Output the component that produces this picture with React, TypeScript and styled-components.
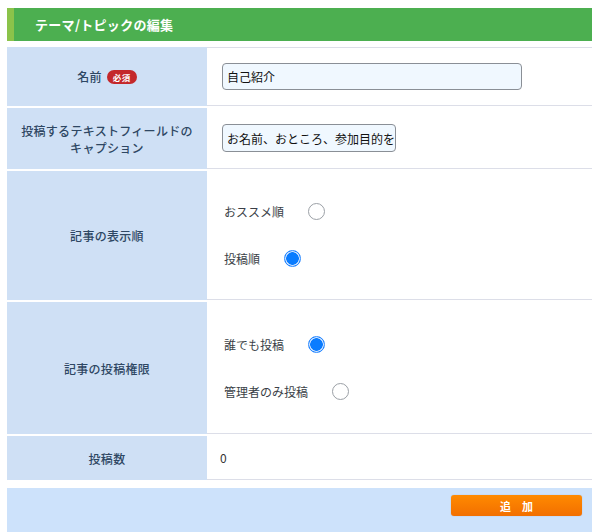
import React from "react";
import styled, { createGlobalStyle } from "styled-components";

const GlobalStyle = createGlobalStyle`
  html, body {
    margin: 0;
    padding: 0;
    background: #fff;
  }
  body {
    font-family: "Noto Sans CJK JP", "Noto Sans", sans-serif;
    font-size: 12px;
    color: #333;
  }
`;

const Page = styled.div`
  width: 585px;
  padding: 8px 0 0 7px;
  overflow: hidden;
`;

const Header = styled.h2`
  margin: 0;
  height: 33px;
  display: flex;
  align-items: center;
  background: #4caf50;
  border-left: 7px solid #8bc34a;
  padding-left: 21px;
  color: #fff;
  font-size: 13px;
  font-weight: 700;
  letter-spacing: 0.3px;
`;

const Table = styled.div`
  margin-top: 6px;
  display: flex;
  flex-direction: column;
  gap: 2px;
`;

const LabelCell = styled.div`
  background: #cfe0f5;
  display: flex;
  align-items: center;
  justify-content: center;
  text-align: center;
  color: #2e4763;
  font-weight: 500;
  line-height: 17px;
  letter-spacing: 0.3px;
  padding: 0 8px;
`;

const ValueCell = styled.div<{ $top?: boolean; $pad?: number }>`
  border-bottom: 1px solid #dcdee8;
  border-top: ${(p) => (p.$top ? "1px solid #dcdee8" : "none")};
  display: flex;
  flex-direction: column;
  justify-content: center;
  padding: 0 ${(p) => p.$pad ?? 15}px;
`;

const Row = styled.div<{ $h: number }>`
  display: grid;
  grid-template-columns: 200px 1fr;
  height: ${(p) => p.$h}px;
`;

const Badge = styled.span`
  display: inline-block;
  margin-left: 5px;
  background: #c4282b;
  color: #fff;
  font-size: 8.5px;
  font-weight: 700;
  line-height: 14px;
  padding: 0 6px;
  border-radius: 8px;
  letter-spacing: 0.5px;
`;

const TextInput = styled.input<{ $w: number; $h?: number }>`
  box-sizing: border-box;
  width: ${(p) => p.$w}px;
  height: ${(p) => p.$h ?? 27}px;
  background: #f0f8ff;
  border: 1px solid #8a8f96;
  border-radius: 4px;
  padding: 0 0 0 4px;
  font-family: inherit;
  font-size: 12px;
  color: #111;
  outline: none;
`;

const Option = styled.label`
  display: flex;
  align-items: center;
  height: 47px;
  color: #3a3f47;
  font-size: 12px;
  gap: 24px;
`;

const Radio = styled.input.attrs({ type: "radio" })`
  appearance: none;
  -webkit-appearance: none;
  margin: 0;
  width: 17px;
  height: 17px;
  border-radius: 50%;
  box-sizing: border-box;
  border: 1px solid #9ba0a6;
  background: #fff;

  &:checked {
    border: 1px solid #2e8bff;
    background: radial-gradient(circle, #0a7cff 0 6px, #cfe4ff 6.5px 7.2px, #0a7cff 7.6px);
  }
`;

const Count = styled.span`
  color: #333;
  font-size: 12px;
`;

const Footer = styled.div`
  margin-top: 8px;
  background: #cde2fb;
  display: flex;
  justify-content: flex-end;
  padding: 7px 10px 16px;
`;

const AddButton = styled.button`
  width: 131px;
  height: 21px;
  border: none;
  border-radius: 3px;
  background: linear-gradient(#ff8a00, #f26f00);
  box-shadow: 0 0 1px rgba(0, 0, 0, 0.3);
  color: #fff;
  font-family: inherit;
  font-size: 11px;
  font-weight: 700;
  cursor: pointer;
  padding: 0;
`;

export default function App() {
  return (
    <>
      <GlobalStyle />
      <Page>
        <Header>テーマ/トピックの編集</Header>
        <Table>
          <Row $h={59}>
            <LabelCell>
              名前<Badge>必須</Badge>
            </LabelCell>
            <ValueCell $top>
              <TextInput $w={300} defaultValue="自己紹介" />
            </ValueCell>
          </Row>
          <Row $h={61}>
            <LabelCell>
              投稿するテキストフィールドの
              <br />
              キャプション
            </LabelCell>
            <ValueCell>
              <TextInput $w={174} $h={28} defaultValue="お名前、おところ、参加目的を" />
            </ValueCell>
          </Row>
          <Row $h={129}>
            <LabelCell>記事の表示順</LabelCell>
            <ValueCell $pad={17}>
              <Option>
                おススメ順
                <Radio name="order" />
              </Option>
              <Option>
                投稿順
                <Radio name="order" defaultChecked />
              </Option>
            </ValueCell>
          </Row>
          <Row $h={132}>
            <LabelCell>記事の投稿権限</LabelCell>
            <ValueCell $pad={17}>
              <Option>
                誰でも投稿
                <Radio name="perm" defaultChecked />
              </Option>
              <Option>
                管理者のみ投稿
                <Radio name="perm" />
              </Option>
            </ValueCell>
          </Row>
          <Row $h={44}>
            <LabelCell>投稿数</LabelCell>
            <ValueCell $pad={13}>
              <Count>0</Count>
            </ValueCell>
          </Row>
        </Table>
        <Footer>
          <AddButton>追　加</AddButton>
        </Footer>
      </Page>
    </>
  );
}
